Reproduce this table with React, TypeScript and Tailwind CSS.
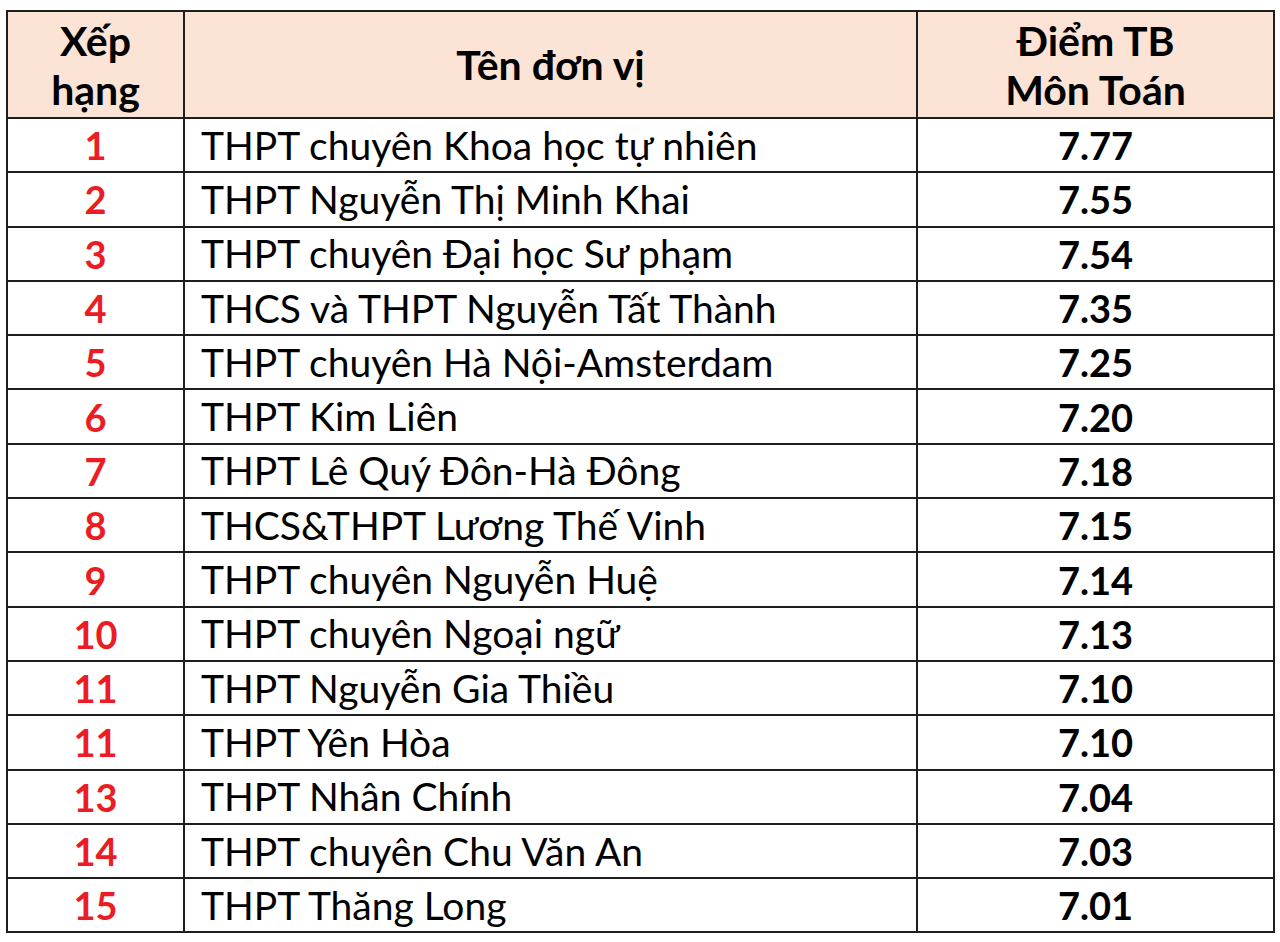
import React from "react";

const rows: [string, string, string][] = [
  ["1", "THPT chuyên Khoa học tự nhiên", "7.77"],
  ["2", "THPT Nguyễn Thị Minh Khai", "7.55"],
  ["3", "THPT chuyên Đại học Sư phạm", "7.54"],
  ["4", "THCS và THPT Nguyễn Tất Thành", "7.35"],
  ["5", "THPT chuyên Hà Nội-Amsterdam", "7.25"],
  ["6", "THPT Kim Liên", "7.20"],
  ["7", "THPT Lê Quý Đôn-Hà Đông", "7.18"],
  ["8", "THCS&THPT Lương Thế Vinh", "7.15"],
  ["9", "THPT chuyên Nguyễn Huệ", "7.14"],
  ["10", "THPT chuyên Ngoại ngữ", "7.13"],
  ["11", "THPT Nguyễn Gia Thiều", "7.10"],
  ["11", "THPT Yên Hòa", "7.10"],
  ["13", "THPT Nhân Chính", "7.04"],
  ["14", "THPT chuyên Chu Văn An", "7.03"],
  ["15", "THPT Thăng Long", "7.01"],
];

export default function App() {
  return (
    <div className="w-[1280px] h-[942px] bg-white pt-[10px] pl-[6px] font-['Lato',sans-serif] text-black">
      <table className="border-collapse border-2 border-[#1e1e1e] table-fixed w-[1267px]">
        <colgroup>
          <col className="w-[177px]" />
          <col className="w-[733px]" />
          <col className="w-[357px]" />
        </colgroup>
        <thead>
          {/* Header */}
          <tr className="bg-[#fbe4d5] h-[107px] text-[41px] font-bold leading-[49px]">
            <th className="border-2 border-[#1e1e1e] font-bold">
              Xếp
              <br />
              hạng
            </th>
            <th className="border-2 border-[#1e1e1e] font-bold">Tên đơn vị</th>
            <th className="border-2 border-[#1e1e1e] font-bold">
              Điểm TB
              <br />
              Môn Toán
            </th>
          </tr>
        </thead>
        <tbody>
          {rows.map(([rank, name, score], i) => (
            <tr key={i} className="h-[54.3px] leading-none">
              <td className="border-2 border-[#1e1e1e] text-center font-bold text-[38px] text-[#ec1c24]">
                {rank}
              </td>
              <td className="border-2 border-[#1e1e1e] pl-[16px] text-[39px]">{name}</td>
              <td className="border-2 border-[#1e1e1e] text-center font-bold text-[38px]">{score}</td>
            </tr>
          ))}
        </tbody>
      </table>
    </div>
  );
}
